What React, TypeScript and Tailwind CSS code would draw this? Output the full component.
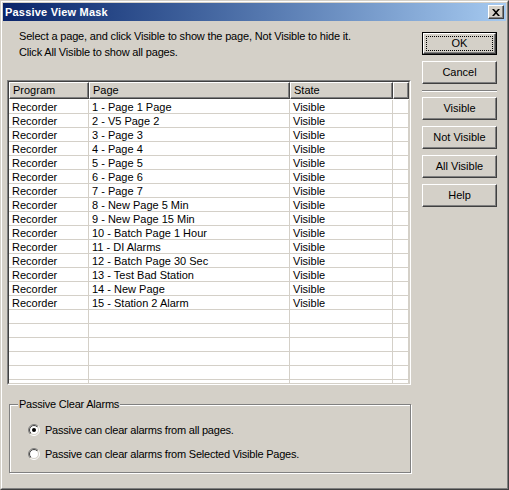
import React from "react";

const pages = [
  "1 - Page 1 Page",
  "2 - V5 Page 2",
  "3 - Page 3",
  "4 - Page 4",
  "5 - Page 5",
  "6 - Page 6",
  "7 - Page 7",
  "8 - New Page 5 Min",
  "9 - New Page 15 Min",
  "10 - Batch Page 1 Hour",
  "11 - DI Alarms",
  "12 - Batch Page 30 Sec",
  "13 - Test Bad Station",
  "14 - New Page",
  "15 - Station 2 Alarm",
];

function Btn({ label }: { label: string }) {
  return (
    <div className="w-[75px] h-[23px] border border-t-white border-l-white border-r-[#404040] border-b-[#404040] shadow-[inset_-1px_-1px_0_#808080] flex items-center justify-center leading-[13px]">
      {label}
    </div>
  );
}

function DefBtn({ label }: { label: string }) {
  return (
    <div className="w-[75px] h-[23px] border border-black">
      <div className="relative h-full border border-t-white border-l-white border-r-[#404040] border-b-[#404040] shadow-[inset_-1px_-1px_0_#808080] flex items-center justify-center leading-[13px]">
        <div className="absolute inset-[2px] border border-dotted border-black" />
        {label}
      </div>
    </div>
  );
}

function Radio({ checked, id }: { checked: boolean; id: string }) {
  return (
    <svg width="12" height="12" viewBox="0 0 12 12" className="shrink-0">
      <defs>
        <linearGradient id={`o${id}`} x1="0" y1="0" x2="1" y2="1">
          <stop offset="0.5" stopColor="#808080" />
          <stop offset="0.5" stopColor="#ffffff" />
        </linearGradient>
        <linearGradient id={`i${id}`} x1="0" y1="0" x2="1" y2="1">
          <stop offset="0.5" stopColor="#404040" />
          <stop offset="0.5" stopColor="#d4d0c8" />
        </linearGradient>
      </defs>
      <circle cx="6" cy="6" r="5.5" fill="none" stroke={`url(#o${id})`} strokeWidth="1" />
      <circle cx="6" cy="6" r="4.5" fill="#ffffff" stroke={`url(#i${id})`} strokeWidth="1" />
      {checked && <circle cx="6" cy="6" r="2" fill="#000000" />}
    </svg>
  );
}

const colW = ["w-[80px]", "w-[201px]", "w-[103px]"];

export default function App() {
  return (
    <div className="w-[509px] h-[490px] bg-[#d4d0c8] border border-t-[#d4d0c8] border-l-[#d4d0c8] border-r-[#404040] border-b-[#404040] font-['Liberation_Sans',Arial,sans-serif] text-[11px] text-black">
      <div className="h-full border border-t-white border-l-white border-r-[#808080] border-b-[#808080] p-[1px] flex flex-col">
        {/* Title bar */}
        <div className="h-[18px] bg-gradient-to-r from-[#0a246a] to-[#a6caf0] flex items-center justify-between pl-[2px] pr-[2px]">
          <span className="text-white font-bold text-[11px] tracking-[0.2px] leading-[14px]">Passive View Mask</span>
          <div className="w-[16px] h-[14px] bg-[#d4d0c8] border border-t-white border-l-white border-r-[#404040] border-b-[#404040] shadow-[inset_-1px_-1px_0_#808080] flex items-center justify-center">
            <svg width="8" height="7" viewBox="0 0 8 7">
              <path d="M0 0h2l2 2.2L6 0h2L5 3.5 8 7H6L4 4.8 2 7H0l3-3.5z" fill="#000" />
            </svg>
          </div>
        </div>

        {/* Body */}
        <div className="flex flex-row pl-[4px]">
          {/* Left column */}
          <div className="w-[404px] flex flex-col">
            <div className="mt-[7px] ml-[12px] leading-[16px] tracking-[-0.17px]">
              <div>Select a page, and click Visible to show the page, Not Visible to hide it.</div>
              <div>Click All Visible to show all pages.</div>
            </div>

            {/* List */}
            <div className="mt-[20px] h-[305px] border border-t-[#808080] border-l-[#808080] border-r-white border-b-white">
              <div className="h-full border border-t-[#404040] border-l-[#404040] border-r-[#d4d0c8] border-b-[#d4d0c8] bg-white overflow-hidden flex flex-col">
                <div className="h-[17px] flex flex-row shrink-0">
                  {["Program", "Page", "State"].map((h, i) => (
                    <div
                      key={h}
                      className={`${colW[i]} h-full bg-[#d4d0c8] border border-t-white border-l-white border-r-[#404040] border-b-[#404040] shadow-[inset_-1px_-1px_0_#808080] pl-[3px] leading-[15px]`}
                    >
                      {h}
                    </div>
                  ))}
                  <div className="flex-1 h-full bg-[#d4d0c8] border border-t-white border-l-white border-r-[#404040] border-b-[#404040] shadow-[inset_-1px_-1px_0_#808080]" />
                </div>
                <div className="pt-[1px] flex flex-col">
                  {pages.map((p) => (
                    <div key={p} className="h-[14px] flex flex-row border-b border-[#d4d0c8] shrink-0">
                      <div className="w-[80px] border-r border-[#d4d0c8] pl-[3px] leading-[15px] whitespace-nowrap">Recorder</div>
                      <div className="w-[201px] border-r border-[#d4d0c8] pl-[3px] leading-[15px] whitespace-nowrap">{p}</div>
                      <div className="w-[103px] border-r border-[#d4d0c8] pl-[3px] leading-[15px] whitespace-nowrap">Visible</div>
                      <div className="flex-1 border-r border-[#d4d0c8]" />
                    </div>
                  ))}
                  {[0, 1, 2, 3, 4, 5].map((k) => (
                    <div key={k} className="h-[14px] flex flex-row border-b border-[#d4d0c8] shrink-0">
                      <div className="w-[80px] border-r border-[#d4d0c8]" />
                      <div className="w-[201px] border-r border-[#d4d0c8]" />
                      <div className="w-[103px] border-r border-[#d4d0c8]" />
                      <div className="flex-1 border-r border-[#d4d0c8]" />
                    </div>
                  ))}
                </div>
              </div>
            </div>

            {/* Group box */}
            <div className="relative mt-[19px] ml-[2px] w-[402px] h-[69px] border border-[#808080] shadow-[inset_1px_1px_0_#ffffff,1px_1px_0_#ffffff] pt-[13px] pl-[18px] tracking-[-0.22px]">
              <span className="absolute left-[8px] top-[-8px] bg-[#d4d0c8] pl-[1px] pr-[1px] leading-[14px]">Passive Clear Alarms</span>
              <div className="h-[24px] flex flex-row items-center gap-[5px]">
                <Radio checked id="a" />
                <span className="leading-[14px]">Passive can clear alarms from all pages.</span>
              </div>
              <div className="h-[24px] flex flex-row items-center gap-[5px]">
                <Radio checked={false} id="b" />
                <span className="leading-[14px]">Passive can clear alarms from Selected Visible Pages.</span>
              </div>
            </div>
          </div>

          {/* Right column */}
          <div className="ml-[11px] mt-[11px] flex flex-col">
            <DefBtn label="OK" />
            <div className="mt-[6px]"><Btn label="Cancel" /></div>
            <div className="mt-[6px] w-[75px] h-[2px] border-t border-t-[#808080] border-b border-b-white" />
            <div className="mt-[5px]"><Btn label="Visible" /></div>
            <div className="mt-[6px]"><Btn label="Not Visible" /></div>
            <div className="mt-[6px]"><Btn label="All Visible" /></div>
            <div className="mt-[6px]"><Btn label="Help" /></div>
          </div>
        </div>
      </div>
    </div>
  );
}
